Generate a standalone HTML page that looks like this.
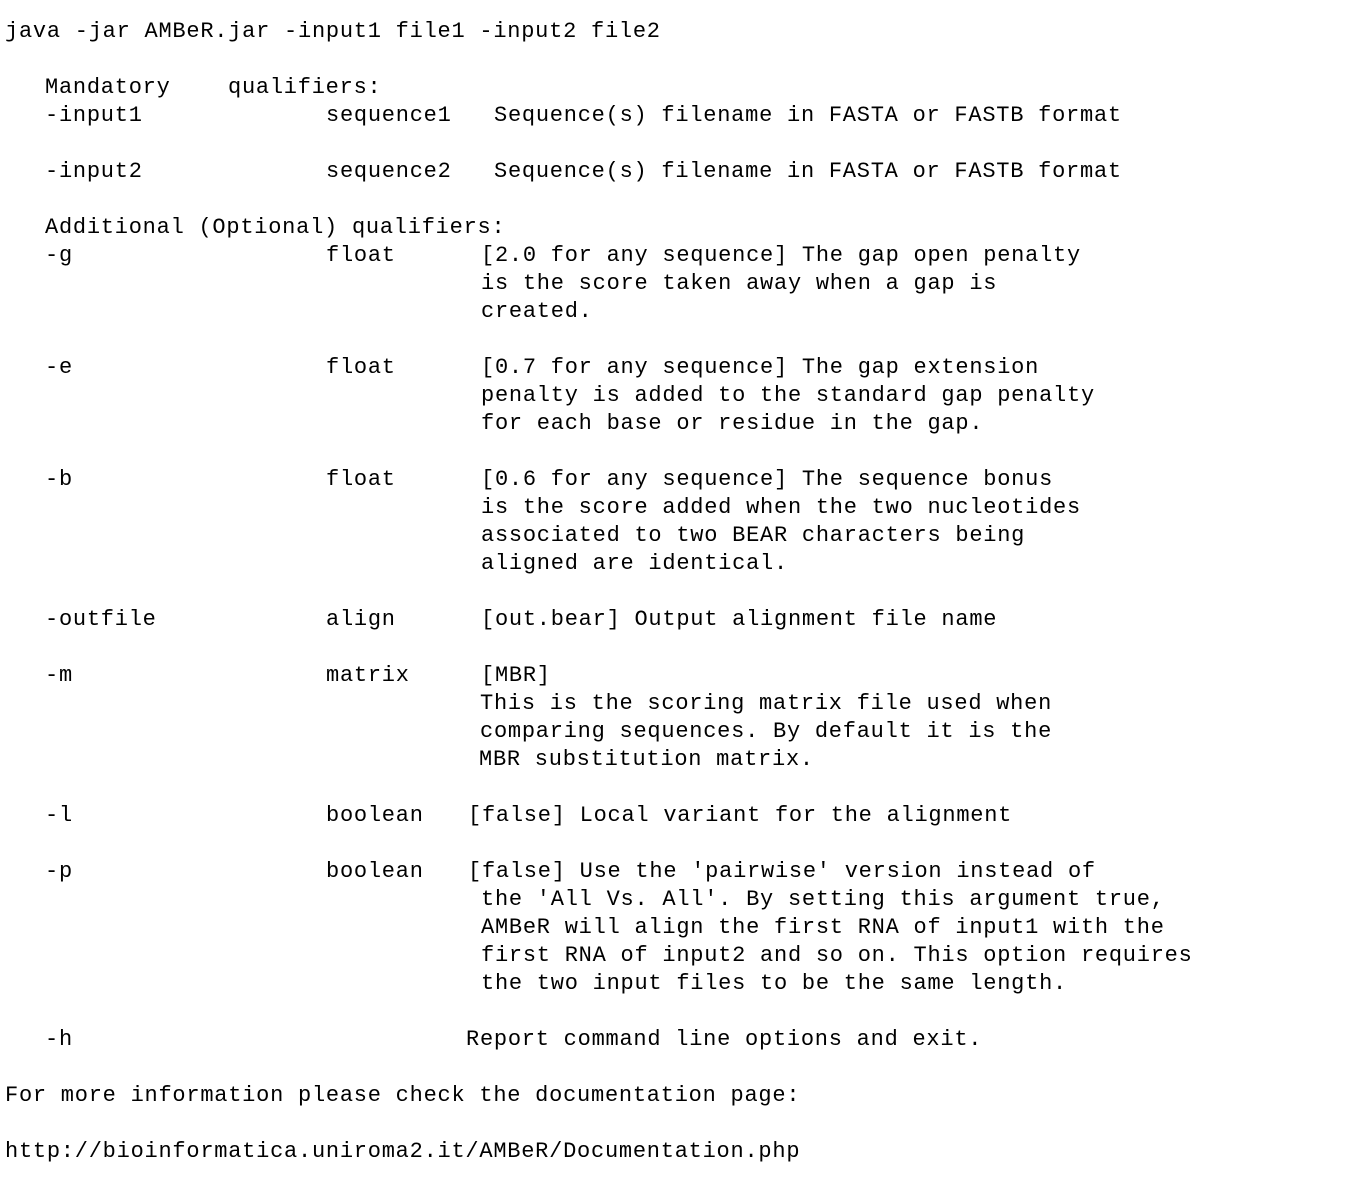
<!DOCTYPE html>
<html><head><meta charset="utf-8"><style>
body{margin:0;background:#fff;width:1356px;height:1186px;position:relative;overflow:hidden}
div{position:absolute;font-family:"Liberation Mono",monospace;font-size:22px;letter-spacing:0.75px;line-height:28px;white-space:pre;color:#000;margin-top:2px}
</style></head><body>
<div style="left:5px;top:16px">java -jar AMBeR.jar -input1 file1 -input2 file2</div>
<div style="left:45px;top:72px">Mandatory</div><div style="left:228px;top:72px">qualifiers:</div>
<div style="left:45px;top:100px">-input1</div><div style="left:326px;top:100px">sequence1</div><div style="left:494px;top:100px">Sequence(s) filename in FASTA or FASTB format</div>
<div style="left:45px;top:156px">-input2</div><div style="left:326px;top:156px">sequence2</div><div style="left:494px;top:156px">Sequence(s) filename in FASTA or FASTB format</div>
<div style="left:45px;top:212px">Additional (Optional) qualifiers:</div>
<div style="left:45px;top:240px">-g</div><div style="left:326px;top:240px">float</div>
<div style="left:481px;top:240px">[2.0 for any sequence] The gap open penalty
is the score taken away when a gap is
created.</div>
<div style="left:45px;top:352px">-e</div><div style="left:326px;top:352px">float</div>
<div style="left:481px;top:352px">[0.7 for any sequence] The gap extension
penalty is added to the standard gap penalty
for each base or residue in the gap.</div>
<div style="left:45px;top:464px">-b</div><div style="left:326px;top:464px">float</div>
<div style="left:481px;top:464px">[0.6 for any sequence] The sequence bonus
is the score added when the two nucleotides
associated to two BEAR characters being
aligned are identical.</div>
<div style="left:45px;top:604px">-outfile</div><div style="left:326px;top:604px">align</div><div style="left:481px;top:604px">[out.bear] Output alignment file name</div>
<div style="left:45px;top:660px">-m</div><div style="left:326px;top:660px">matrix</div>
<div style="left:481px;top:660px">[MBR]</div>
<div style="left:480px;top:688px">This is the scoring matrix file used when
comparing sequences. By default it is the</div>
<div style="left:479px;top:744px">MBR substitution matrix.</div>
<div style="left:45px;top:800px">-l</div><div style="left:326px;top:800px">boolean</div><div style="left:468px;top:800px">[false] Local variant for the alignment</div>
<div style="left:45px;top:856px">-p</div><div style="left:326px;top:856px">boolean</div><div style="left:468px;top:856px">[false] Use the 'pairwise' version instead of</div>
<div style="left:481px;top:884px">the 'All Vs. All'. By setting this argument true,
AMBeR will align the first RNA of input1 with the
first RNA of input2 and so on. This option requires
the two input files to be the same length.</div>
<div style="left:45px;top:1024px">-h</div><div style="left:466px;top:1024px">Report command line options and exit.</div>
<div style="left:5px;top:1080px">For more information please check the documentation page:</div>
<div style="left:5px;top:1136px">http://bioinformatica.uniroma2.it/AMBeR/Documentation.php</div>
</body></html>
